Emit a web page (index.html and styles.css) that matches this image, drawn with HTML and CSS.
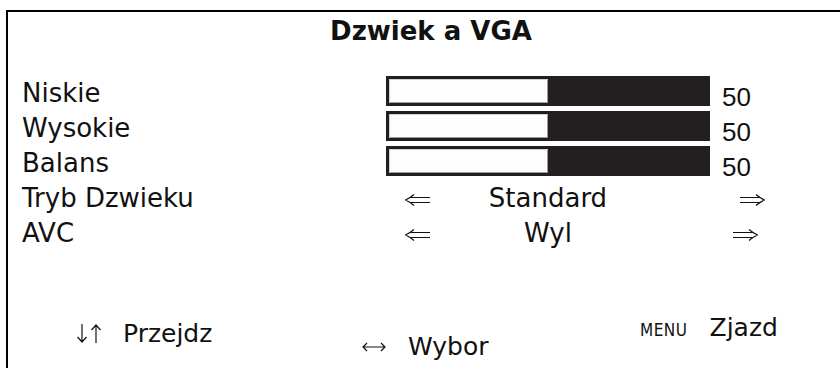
FILE: index.html
```html
<!DOCTYPE html>
<html>
<head>
	<title>Dzwiek a VGA</title>
	<meta charset="utf-8">
	<link rel="stylesheet" href="styles.css">
</head>
<body>
	<div class="panel">
		<div class="title">Dzwiek a VGA</div>
		<ul class="rows">
			<li class="row">
				<span class="label">Niskie</span>
				<div class="bar"><div class="fill" style="width: 50%"></div></div>
				<span class="num">50</span>
			</li>
			<li class="row">
				<span class="label">Wysokie</span>
				<div class="bar"><div class="fill" style="width: 50%"></div></div>
				<span class="num">50</span>
			</li>
			<li class="row">
				<span class="label">Balans</span>
				<div class="bar"><div class="fill" style="width: 50%"></div></div>
				<span class="num">50</span>
			</li>
			<li class="row">
				<span class="label">Tryb Dzwieku</span>
				<span class="arrow left"><svg width="25" height="12" viewBox="0 0 25 12"><path d="M25 3.5H5M25 8.5H5M9 0.5Q5 4 0.5 6Q5 8 9 11.5" fill="none" stroke="#111" stroke-width="1.2"/></svg></span>
				<span class="value">Standard</span>
				<span class="arrow right"><svg width="25" height="12" viewBox="0 0 25 12"><path d="M0 3.5H20M0 8.5H20M16 0.5Q20 4 24.5 6Q20 8 16 11.5" fill="none" stroke="#111" stroke-width="1.2"/></svg></span>
			</li>
			<li class="row">
				<span class="label">AVC</span>
				<span class="arrow left"><svg width="25" height="12" viewBox="0 0 25 12"><path d="M25 3.5H5M25 8.5H5M9 0.5Q5 4 0.5 6Q5 8 9 11.5" fill="none" stroke="#111" stroke-width="1.2"/></svg></span>
				<span class="value">Wyl</span>
				<span class="arrow right short"><svg width="25" height="12" viewBox="0 0 25 12"><path d="M0 3.5H20M0 8.5H20M16 0.5Q20 4 24.5 6Q20 8 16 11.5" fill="none" stroke="#111" stroke-width="1.2"/></svg></span>
			</li>
		</ul>
		<div class="footer">
			<div class="hint move">
				<svg class="key" width="28" height="19" viewBox="0 0 28 19"><path d="M7 0V18M2.5 13L7 18L11.5 13M21 1V19M16.5 6L21 1L25.5 6" fill="none" stroke="#111" stroke-width="1.2"/></svg>Przejdz
			</div>
			<div class="hint pick">
				<svg class="key swap" width="24" height="10" viewBox="0 0 24 10"><path d="M1 5H23M5 1L1 5L5 9M19 1L23 5L19 9" fill="none" stroke="#111" stroke-width="1.2"/></svg>Wybor
			</div>
			<div class="hint quit"><span class="menu">MENU</span>Zjazd</div>
		</div>
	</div>
</body>
</html>
```

FILE: styles.css
```css
body{
	margin: 0;
	background: #fff;
	color: #111;
	font-family: "DejaVu Sans", Verdana, sans-serif;
	font-size: 25px;
}
.panel{
	margin: 10px 0 0 6px;
	height: 358px;
	box-sizing: border-box;
	border-top: 2px solid #000;
	border-left: 2px solid #000;
	padding-left: 14px;
}
.title{
	margin-top: 4px;
	line-height: 30px;
	font-size: 26px;
	font-weight: bold;
	text-align: center;
}
.rows{
	list-style-type: none;
	margin: 30px 0 0;
	padding: 0;
}
.row{
	display: flex;
	align-items: flex-start;
	height: 35px;
	line-height: 35px;
}
.label{
	width: 364px;
	flex: none;
	font-size: 26px;
}
.bar{
	width: 324px;
	height: 30px;
	box-sizing: border-box;
	padding: 3px;
	background: #231f20;
}
.fill{
	height: 100%;
	background: #fdfdfd;
	box-shadow: inset 1px 1px 0 #d0d0d0, inset -1px -1px 0 #9a9a9a;
}
.num{
	margin-left: 12px;
	padding-top: 4px;
	font-family: "Liberation Sans", Arial, sans-serif;
	font-size: 26px;
}
.arrow{
	display: inline-block;
	width: 25px;
	font-size: 26px;
}
.arrow svg{
	vertical-align: 1px;
}
.arrow.left{
	margin-left: 19px;
}
.arrow.right{
	margin-left: 74px;
}
.arrow.short{
	margin-left: 67px;
}
.value{
	width: 236px;
	text-align: center;
	font-size: 26px;
}
.footer{
	display: flex;
	align-items: flex-start;
	margin-top: 62px;
	padding-left: 53px;
	line-height: 30px;
}
.hint{
	display: flex;
	align-items: baseline;
}
.key{
	flex: none;
	margin-right: 20px;
	position: relative;
	top: 1px;
}
.key.swap{
	margin-right: 22px;
	top: -3px;
}
.move{
	width: 287px;
	padding-top: 6px;
}
.pick{
	width: 278px;
	padding-top: 19px;
}
.menu{
	font-family: "DejaVu Sans Condensed", "DejaVu Sans", sans-serif;
	font-stretch: condensed;
	font-size: 17px;
	letter-spacing: 0.5px;
	margin-right: 22px;
}
```
